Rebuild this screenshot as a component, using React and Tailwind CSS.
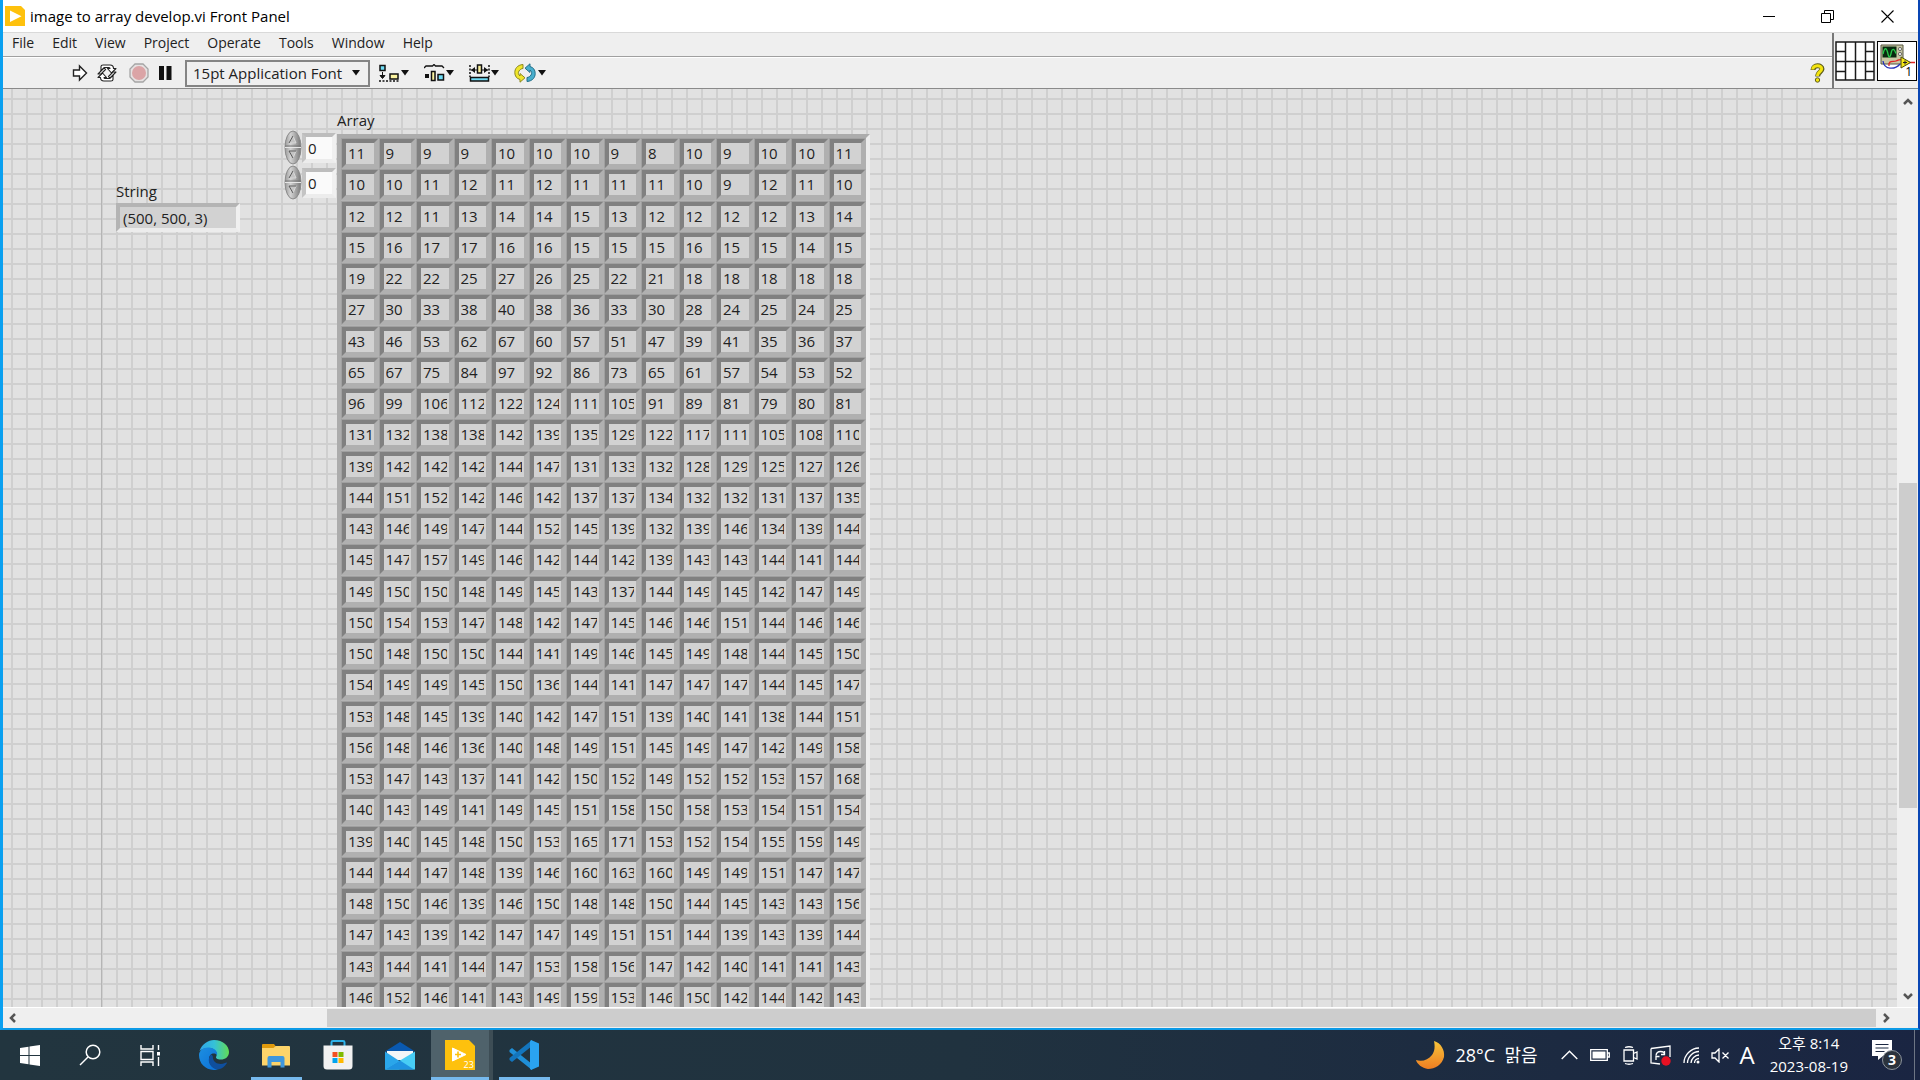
const rows = `11 9 9 9 10 10 10 9 8 10 9 10 10 11
10 10 11 12 11 12 11 11 11 10 9 12 11 10
12 12 11 13 14 14 15 13 12 12 12 12 13 14
15 16 17 17 16 16 15 15 15 16 15 15 14 15
19 22 22 25 27 26 25 22 21 18 18 18 18 18
27 30 33 38 40 38 36 33 30 28 24 25 24 25
43 46 53 62 67 60 57 51 47 39 41 35 36 37
65 67 75 84 97 92 86 73 65 61 57 54 53 52
96 99 106 112 122 124 111 105 91 89 81 79 80 81
131 132 138 138 142 139 135 129 122 117 111 105 108 110
139 142 142 142 144 147 131 133 132 128 129 125 127 126
144 151 152 142 146 142 137 137 134 132 132 131 137 135
143 146 149 147 144 152 145 139 132 139 146 134 139 144
145 147 157 149 146 142 144 142 139 143 143 144 141 144
149 150 150 148 149 145 143 137 144 149 145 142 147 149
150 154 153 147 148 142 147 145 146 146 151 144 146 146
150 148 150 150 144 141 149 146 145 149 148 144 145 150
154 149 149 145 150 136 144 141 147 147 147 144 145 147
153 148 145 139 140 142 147 151 139 140 141 138 144 151
156 148 146 136 140 148 149 151 145 149 147 142 149 158
153 147 143 137 141 142 150 152 149 152 152 153 157 168
140 143 149 141 149 145 151 158 150 158 153 154 151 154
139 140 145 148 150 153 165 171 153 152 154 155 159 149
144 144 147 148 139 146 160 163 160 149 149 151 147 147
148 150 146 139 146 150 148 148 150 144 145 143 143 156
147 143 139 142 147 147 149 151 151 144 139 143 139 144
143 144 141 144 147 153 158 156 147 142 140 141 141 143
146 152 146 141 143 149 159 153 146 150 142 144 142 143`
  .split("\n")
  .map((line) => line.split(" "));

const menus = ["File", "Edit", "View", "Project", "Operate", "Tools", "Window", "Help"];

function Caret() {
  return (
    <svg width="8" height="6" viewBox="0 0 8 6" aria-hidden="true">
      <path d="M0 0h8L4 5.500z" fill="#111" />
    </svg>
  );
}

function TitleBar() {
  return (
    <header className="flex h-8 shrink-0 items-center bg-white pl-[2px]">
      <svg width="20" height="20" viewBox="0 0 20 20" aria-hidden="true">
        <path d="M0 0h16l4 4v16H0z" fill="#fec10d" />
        <path d="M5 4.500v11.500l11.500-5.700z" fill="#fff" />
      </svg>
      <h1 className="ml-[5px] text-[15px] text-black">image to array develop.vi Front Panel</h1>
      <div className="ml-auto flex">
        <button aria-label="Minimize" className="flex h-8 w-[58px] items-center justify-center">
          <svg width="13" height="13" viewBox="0 0 13 13"><path d="M0 6.500h12" stroke="#000" /></svg>
        </button>
        <button aria-label="Restore" className="flex h-8 w-[58px] items-center justify-center">
          <svg width="13" height="13" viewBox="0 0 13 13" fill="none" stroke="#000">
            <path d="M.5 3.500h9v9h-9zM3.500 3.500v-3h9v9h-3" />
          </svg>
        </button>
        <button aria-label="Close" className="flex h-8 w-[62px] items-center justify-center">
          <svg width="13" height="13" viewBox="0 0 13 13"><path d="M.5.5l12 12M12.500.5l-12 12" stroke="#000" strokeWidth="1.100" /></svg>
        </button>
      </div>
    </header>
  );
}

function ToolBar() {
  return (
    <div className="flex h-[31px] items-center border-t border-white pl-[69px]">
      <button aria-label="Run">
        <svg width="16" height="18" viewBox="0 0 16 18"><path d="M1.500 6h6V2l7 7-7 7v-4h-6z" fill="#fff" stroke="#222" strokeWidth="1.400" /></svg>
      </button>
      <button aria-label="Run Continuously" className="ml-[9px]">
        <svg width="20" height="18" viewBox="0 0 20 18" fill="#fff" stroke="#222" strokeWidth="1.100" strokeLinejoin="round">
          <path d="M4 7V2.500Q4 1 6 1h7q3.500 0 3.500 3.500H19L14.500 9 10.500 4.500H13Q13 3.500 12 3.500H7.500z" />
          <path d="M16 11v4.500q0 1.500-2 1.500H7q-3.500 0-3.500-3.500H1L5.500 9l4 4.500H7q0 1 1 1h4.500z" />
          <path d="M1 10l6-6 1.500 1.500L4 10zM19 8l-6 6-1.500-1.500L16 8z" />
        </svg>
      </button>
      <button aria-label="Abort Execution" className="ml-3">
        <svg width="20" height="20" viewBox="0 0 20 20">
          <path d="M6 1h8l5 5v8l-5 5H6l-5-5V6z" fill="#e6e2e2" stroke="#a5a5a5" strokeWidth="1.300" />
          <circle cx="10" cy="10" r="7" fill="#dba4a6" />
        </svg>
      </button>
      <button aria-label="Pause" className="ml-[10px]">
        <svg width="13" height="14" viewBox="0 0 13 14"><path d="M0 0h5v14H0zM7.500 0h5v14h-5z" fill="#111" /></svg>
      </button>
      <button className="ml-[13px] flex h-[27px] w-[185px] items-center justify-between border-2 border-[#848484] bg-[#efefef] pr-2 pl-[6px] text-[15px] text-[#222]">
        15pt Application Font
        <Caret />
      </button>
      <button aria-label="Align Objects" className="ml-[9px] flex items-center gap-[1px]">
        <svg width="21" height="18" viewBox="0 0 21 18">
          <path d="M1 1.500h5v5H1z" fill="#6fdcf5" stroke="#111" strokeWidth="1.500" />
          <path d="M3.500 8v5M1 11.500h5l-2.500 3z" fill="#111" stroke="#111" />
          <path d="M0 17h20" stroke="#111" strokeWidth="1.500" strokeDasharray="2 1.500" />
          <path d="M11 10h8v5h-8z" fill="#fbf3a0" stroke="#111" strokeWidth="1.500" />
        </svg>
        <Caret />
      </button>
      <button aria-label="Distribute Objects" className="ml-[15px] flex items-center gap-[1px]">
        <svg width="21" height="18" viewBox="0 0 21 18">
          <path d="M0 4l2-2h6.500L10 .5 11.500 2H18l2 2" fill="none" stroke="#111" strokeWidth="1.300" />
          <path d="M1 10h4v4H1z" fill="#111" />
          <path d="M7.500 7.500h3.500v9H7.500z" fill="#fbf3a0" stroke="#111" strokeWidth="1.500" />
          <path d="M14 10.500h5.500v5.500H14z" fill="#6fdcf5" stroke="#111" strokeWidth="1.500" />
        </svg>
        <Caret />
      </button>
      <button aria-label="Resize Objects" className="ml-[15px] flex items-center gap-[1px]">
        <svg width="21" height="18" viewBox="0 0 21 18">
          <path d="M1 1v12M20 1v12" stroke="#111" strokeWidth="1.500" strokeDasharray="2 1.500" />
          <path d="M2 6h6M13 6h6" stroke="#111" />
          <path d="M2 6l4-3v6zM19 6l-4-3v6z" fill="#111" />
          <path d="M8.500 1h4v8h-4z" fill="#fbf3a0" stroke="#111" strokeWidth="1.500" />
          <path d="M1.500 13.500h18v3.500h-18z" fill="#6fdcf5" stroke="#111" strokeWidth="1.500" />
        </svg>
        <Caret />
      </button>
      <button aria-label="Reorder" className="ml-[15px] flex items-center gap-[2px]">
        <svg width="22" height="20" viewBox="0 0 22 20" strokeWidth="1" strokeLinejoin="round">
          <path d="M9 1.500C3 2 .800 6 .800 9.500.8 13 2.500 15.500 6 16.500v2.700l5-4.400-5-4.300v2.500C4 11.500 4 9.500 5 8s2.500-2.500 4-2.500z" fill="#f0e62c" stroke="#8b8720" />
          <path d="M13 18.500c6-.5 8.200-4.500 8.200-8 0-3.500-1.700-6-5.200-7V.8l-5 4.400 5 4.300V7c2 1.500 2 3.500 1 5s-2.500 2.500-4 2.500z" fill="#48aecd" stroke="#23708a" />
        </svg>
        <Caret />
      </button>
      <button aria-label="Show Context Help" className="mr-[7px] ml-auto">
        <svg width="15" height="20" viewBox="0 0 15 20">
          <path d="M3 7C3 1.500 12 1.500 12 6c0 3-4.300 3-4.300 7.500" fill="none" stroke="#5f5e1c" strokeWidth="5" />
          <path d="M2.700 6.500C3 1.500 11.700 1.500 11.700 5.800c0 3-4.300 3-4.300 7.200" fill="none" stroke="#f3e40f" strokeWidth="3" />
          <circle cx="7.500" cy="17" r="2.200" fill="#f3e40f" stroke="#5f5e1c" />
        </svg>
      </button>
    </div>
  );
}

function ConnectorPane() {
  return (
    <svg width="40" height="40" viewBox="0 0 40 40" role="img" aria-label="Connector pane" fill="#fff" stroke="#1a1a1a" strokeWidth="1.500">
      <path d="M1 1h38v38H1z" />
      <path d="M10.500 1v38M20.500 1v38M30.500 1v38M1 20.500h38M1 10.500h9.500M1 30.500h9.500M30.500 10.500H39M30.500 30.500H39" />
    </svg>
  );
}

function ViIcon() {
  return (
    <div className="relative size-10 border border-black bg-white">
      <svg width="38" height="38" viewBox="0 0 38 38" aria-hidden="true">
        <path d="M3 3h22v19H3z" fill="#c9c7a4" stroke="#55543f" />
        <path d="M4.500 4.500h14v11h-14z" fill="#082a10" />
        <path d="M5 12c1.500-7 3.500-7 5 0s3 0 3.500-2.500 2.500-4 4.500 2" fill="none" stroke="#29c94a" strokeWidth="1.300" />
        <circle cx="22" cy="7" r="1.600" fill="#eee" stroke="#444" strokeWidth=".7" />
        <circle cx="22" cy="12" r="1.600" fill="#eee" stroke="#444" strokeWidth=".7" />
        <path d="M5 19c1 9 12 9 17 3" fill="none" stroke="#2432b8" strokeWidth="1.300" />
        <path d="M11 24c-1-6 4-4 7-5s3-2 6-1M31 20.500h6" fill="none" stroke="#e02525" strokeWidth="1.300" />
        <path d="M23 15v11l9.500-5.500z" fill="#f7ea15" stroke="#4d4a09" />
        <path d="M25 20.500h4M27 18.500v4" stroke="#222" />
      </svg>
      <span className="absolute right-1 bottom-0 text-xs text-black">1</span>
    </div>
  );
}

function Bars() {
  return (
    <div className="flex shrink-0 border-t border-b border-t-[#d9d9d9] border-b-[#8a8a8a] bg-[#efefef]">
      <div className="min-w-0 flex-1">
        <nav className="flex h-6 items-start gap-[18px] border-b border-[#a0a0a0] pl-[9px] text-sm text-[#222]">
          {menus.map((m) => (
            <button key={m}>{m}</button>
          ))}
        </nav>
        <ToolBar />
      </div>
      <div className="flex items-center gap-[2px] border-l-2 border-[#777] px-[1px]">
        <ConnectorPane />
        <ViIcon />
      </div>
    </div>
  );
}

function Spinner() {
  return (
    <svg width="18" height="35" viewBox="0 0 18 35" aria-hidden="true">
      <defs>
        <linearGradient id="knob" x1="0" x2="1">
          <stop offset="0" stopColor="#9a9a9a" />
          <stop offset=".35" stopColor="#d2d2d2" />
          <stop offset="1" stopColor="#777" />
        </linearGradient>
      </defs>
      <ellipse cx="9" cy="17.500" rx="8" ry="16.500" fill="url(#knob)" stroke="#8a8a8a" />
      <path d="M1 16h16" stroke="#777" />
      <path d="M1 17.500h16" stroke="#e6e6e6" />
      <path d="M5 13l4-7 3 7z" fill="#c4c4c4" stroke="#d8d8d8" />
      <path d="M5 13l4-7" stroke="#555" />
      <path d="M5 21h7l-3 7z" fill="#c4c4c4" stroke="#d8d8d8" />
      <path d="M5 21h7M5 21l4 7" stroke="#555" />
    </svg>
  );
}

function IndexControl({ label }) {
  return (
    <div className="flex h-[35px] items-start">
      <Spinner />
      <input
        aria-label={label}
        defaultValue="0"
        className="mt-[3px] h-[30px] w-[34px] border-4 border-t-[#bdbdbd] border-r-[#f0f0f0] border-b-[#ececec] border-l-[#c4c4c4] bg-[#fafafa] pl-[2px] text-[15px] text-[#222]"
      />
    </div>
  );
}

function FrontPanel() {
  return (
    <main className="relative min-w-0 flex-1 overflow-hidden bg-[#e1e1e1] bg-[linear-gradient(to_right,#cfcfcf_2px,transparent_2px),linear-gradient(to_bottom,#cfcfcf_2px,transparent_2px)] bg-[size:15px_15px] bg-[position:8px_9px] text-[15px] text-[#222]">
      <div className="absolute inset-y-0 left-[98px] w-px bg-[#b5b5b5]" />
      <div className="absolute top-[90px] left-[113px] w-[124px]">
        <label htmlFor="string" className="block leading-6">String</label>
        <input
          id="string"
          readOnly
          value="(500, 500, 3)"
          className="block h-[29px] w-full border-4 border-t-[#b4b4b4] border-r-[#f0f0f0] border-b-[#ececec] border-l-[#b4b4b4] bg-[#d2d2d2] pl-[3px]"
        />
      </div>
      <div className="absolute top-[41px] left-[281px]">
        <IndexControl label="Row index" />
        <IndexControl label="Column index" />
      </div>
      <div className="absolute top-[19px] left-[334px]">
        <h2 className="leading-6">Array</h2>
        <div className="mt-[2px] border-4 border-t-[#acacac] border-r-[#ededed] border-b-[#ededed] border-l-[#acacac] bg-[#b4b4b4]">
          <table aria-label="Array" className="h-[875px] w-[525px] table-fixed border-collapse">
            <tbody>
              {rows.map((row, r) => (
                <tr key={r}>
                  {row.map((value, c) => (
                    <td key={c} className="p-0">
                      <div className="border border-[#a0a0a0] border-r-[#b0b0b0] border-b-[#b0b0b0]">
                        <div className="h-[29px] overflow-hidden border-4 border-t-[#808080] border-r-[#b0b0b0] border-b-[#b0b0b0] border-l-[#808080] bg-[#d2d2d2] pr-[2px] pl-[2px] leading-[21px]">
                          <div className="overflow-hidden">{value}</div>
                        </div>
                      </div>
                    </td>
                  ))}
                </tr>
              ))}
            </tbody>
          </table>
        </div>
      </div>
    </main>
  );
}

function Chevron({ className }) {
  return (
    <svg width="10" height="10" viewBox="0 0 10 10" className={className} aria-hidden="true">
      <path d="M1 7l4-4 4 4" fill="none" stroke="#555" strokeWidth="2.500" />
    </svg>
  );
}

function TaskButton({ label, children, className = "w-[62px]" }) {
  return (
    <button aria-label={label} className={`flex h-full items-center justify-center ${className}`}>
      {children}
    </button>
  );
}

function TaskBar() {
  return (
    <footer className="flex h-[50px] shrink-0 items-center bg-linear-to-r from-[#22353f] via-[#20323f] to-[#1a2542] text-white">
      <TaskButton label="Start" className="w-[60px]">
        <svg width="20" height="21" viewBox="0 0 20 21" fill="#fff"><path d="M0 3l8.500-1.200V10H0zM9.500 1.600L20 0v10H9.500zM0 11h8.500v8.200L0 18zM9.500 11H20v10L9.500 19.400z" /></svg>
      </TaskButton>
      <TaskButton label="Search" className="w-[60px]">
        <svg width="22" height="22" viewBox="0 0 22 22" fill="none" stroke="#fff" strokeWidth="1.500"><circle cx="14" cy="8" r="6.800" /><path d="M9 13l-8 8" /></svg>
      </TaskButton>
      <TaskButton label="Task View" className="mr-[3px] w-[60px]">
        <svg width="21" height="21" viewBox="0 0 21 21" fill="none" stroke="#fff" strokeWidth="1.400"><path d="M1 0v4h12V0M1 21v-4h12v4M1 6.500h12v8H1zM18.500 0v5M18.500 12v9" /><path d="M17 7h3v3.500h-3z" fill="#fff" stroke="none" /></svg>
      </TaskButton>
      <TaskButton label="Microsoft Edge">
        <svg width="30" height="30" viewBox="0 0 30 30">
          <defs>
            <linearGradient id="edgeTop" x1="0" x2="1"><stop offset="0" stopColor="#2fa5e8" /><stop offset=".5" stopColor="#35c1d8" /><stop offset="1" stopColor="#62dc54" /></linearGradient>
            <linearGradient id="edgeLeft" x1="0" y1="0" x2="1" y2="1"><stop offset="0" stopColor="#1d8fe0" /><stop offset="1" stopColor="#0b6fd8" /></linearGradient>
          </defs>
          <path d="M.5 11C3 4 9 0 15 0c9 0 15 6 15 12 0 5-4 7.500-8 7.500-4 0-6-1.500-4.500-3.500C19 11 14 8 10 8 6 8 3 9 .5 11z" fill="url(#edgeTop)" />
          <path d="M0 15C0 10 5 7 10 7.500c5 .5 9 3.500 8 7.500-3-3-8-1-8 4 0 6 5 10 9.500 10.500C9 32 0 25 0 15z" fill="url(#edgeLeft)" />
          <path d="M12 14.500C7 20 11 29.500 20 29.300c3-.5 6-3 8-6.300-.5-.8-1-.5-2 0-5 2.200-11 .5-12-4.500-.2-1.500.2-3-2-4z" fill="#0f4f9e" />
        </svg>
      </TaskButton>
      <TaskButton label="File Explorer" className="w-[62px] bg-[linear-gradient(#76b9ed,#76b9ed)] bg-[size:51px_3px] bg-bottom bg-no-repeat">
        <svg width="28" height="25" viewBox="0 0 28 25">
          <path d="M0 2Q0 1 1 1h11l1.500 2-1.500 3H0z" fill="#e09a0c" />
          <path d="M0 5h11.500l2-2H27q1 0 1 1v18.500H0z" fill="#fdd46a" />
          <path d="M5.500 24.500V15q0-2 2-2h13q2 0 2 2v9.500h-4V19h-9v5.500z" fill="#3f97dd" />
        </svg>
      </TaskButton>
      <TaskButton label="Microsoft Store">
        <svg width="30" height="30" viewBox="0 0 30 30">
          <path d="M8.500 7V2.200Q8.500 1 10 1h10q1.500 0 1.500 1.200V7" fill="none" stroke="#2fb3ea" strokeWidth="2" />
          <path d="M.5 5.500h29V26q0 3.500-3.500 3.500H4Q.5 29.500.5 26z" fill="#f1f1f1" />
          <path d="M9.500 12h5v5h-5z" fill="#f25022" /><path d="M15.500 12h5v5h-5z" fill="#7fba00" />
          <path d="M9.500 18h5v5h-5z" fill="#00a4ef" /><path d="M15.500 18h5v5h-5z" fill="#ffb900" />
        </svg>
      </TaskButton>
      <TaskButton label="Mail">
        <svg width="30" height="29" viewBox="0 0 30 29">
          <path d="M0 10.500L15 1l15 9.500z" fill="#0a59b0" />
          <path d="M2 10h26v9H2z" fill="#f4f6f8" />
          <path d="M0 10.500L19 23l-5 5.500H0z" fill="#2aa6ea" />
          <path d="M0 28.500L30 10.500v18z" fill="#48cdf5" />
          <path d="M15 19.500L29 28.500H0z" fill="#1f93e0" />
        </svg>
      </TaskButton>
      <TaskButton label="LabVIEW" className="w-[62px] border-r-4 border-[#3d4d55] bg-[linear-gradient(#76b9ed,#76b9ed)] bg-[size:100%_3px] bg-bottom bg-no-repeat bg-[color:#4f626b] bg-origin-border">
        <svg width="30" height="30" viewBox="0 0 30 30">
          <path d="M0 0h24l6 6v24H0z" fill="#fec10d" />
          <path d="M7.500 8v13L21 14.500z" fill="#fff" stroke="#fff" strokeLinejoin="round" />
          <path d="M10 14.500h6M13 11.500v6" stroke="#fec10d" strokeWidth="1.600" />
          <text x="18.500" y="28" fontSize="9" fill="#fff" fontFamily="Open Sans">23</text>
        </svg>
      </TaskButton>
      <TaskButton label="Visual Studio Code" className="w-[62px] bg-[linear-gradient(#76b9ed,#76b9ed)] bg-[size:51px_3px] bg-bottom bg-no-repeat">
        <svg width="30" height="30" viewBox="0 0 30 30">
          <path d="M.5 10L3 8l20 16v6L.5 12z" fill="#1f8fd8" />
          <path d="M.5 20L3 22l20-16V0L.5 18z" fill="#1375bd" />
          <path d="M22 0l8 3.500v23L22 30l-1-1.500V1.500z" fill="#2aa3f0" />
        </svg>
      </TaskButton>

      <div className="ml-auto flex h-full items-center pr-[5px]">
        <svg width="29" height="28" viewBox="0 0 29 28" role="img" aria-label="Clear night">
          <defs><linearGradient id="moon" x1="0" y1="0" x2="0" y2="1"><stop offset="0" stopColor="#f8c53a" /><stop offset="1" stopColor="#ee7d22" /></linearGradient></defs>
          <path d="M18 0c7 2 11 9 10 16-2 8-9 12-16 12-6-1-11-5-12-9 6 2 12 0 16-5 3-4 3-9 2-14z" fill="url(#moon)" />
        </svg>
        <span className="ml-[10px] text-lg whitespace-pre">28°C  맑음</span>
        <button aria-label="Show hidden icons" className="ml-[23px]"><svg width="17" height="10" viewBox="0 0 17 10"><path d="M.7 9l7.800-7.800L16.300 9" fill="none" stroke="#fff" strokeWidth="1.400" /></svg></button>
        <svg className="ml-3" width="20" height="12" viewBox="0 0 20 12" role="img" aria-label="Battery"><path d="M.7.7h16.600v10.600H.7zM17.500 4h1.800v4h-1.800" fill="none" stroke="#fff" strokeWidth="1.300" /><path d="M2.500 2.500h13v7h-13z" fill="#fff" /></svg>
        <svg className="ml-[13px]" width="15" height="19" viewBox="0 0 15 19" role="img" aria-label="Camera" fill="none" stroke="#fff" strokeWidth="1.300"><path d="M1 4h9.500v11H1zM10.500 7.500L14 6v7l-3.500-1.500M2 1.500q4-1.500 8 0M2 17.500q4 1.500 8 0" /></svg>
        <svg className="ml-[12px]" width="21" height="21" viewBox="0 0 21 21" role="img" aria-label="Update" fill="none" stroke="#fff" strokeWidth="1.300"><path d="M1 3.500L20 1v11M1 3.500V18l9 1M6 10.500q.5-4 4.500-4t4 3M14.500 6v3.500H11M6 15v-3.500h3.500" /><circle cx="16" cy="16" r="4.700" fill="#e81123" stroke="none" /></svg>
        <svg className="ml-[12px]" width="17" height="17" viewBox="0 0 17 17" role="img" aria-label="Wi-Fi" fill="none" stroke="#fff" strokeWidth="1.300"><path d="M1 16C1 8 8 1 16 1M4.500 16C4.500 10 10 4.500 16 4.500M8 16c0-4 4-8 8-8M11.500 16c0-2.500 2-4.500 4.500-4.500" /><circle cx="15" cy="15" r="1.500" fill="#fff" stroke="none" /></svg>
        <svg className="ml-[11px]" width="19" height="15" viewBox="0 0 19 15" role="img" aria-label="Muted" fill="none" stroke="#fff" strokeWidth="1.300"><path d="M1 5h3l4-4v13l-4-4H1zM11.500 4.500l6 6M17.500 4.500l-6 6" /></svg>
        <button aria-label="Input language" className="ml-[10px] text-2xl">A</button>
        <time className="ml-[15px] flex flex-col items-center text-[15px] leading-[23px]">
          <span>오후 8:14</span>
          <span>2023-08-19</span>
        </time>
        <button aria-label="Notifications" className="relative ml-6 h-8 w-[30px]">
          <svg width="30" height="32" viewBox="0 0 30 32">
            <path d="M0 1h20v16h-9l-5 4v-4H0z" fill="#fff" />
            <path d="M3.500 5.500h13M3.500 9h13M3.500 12.500h9" stroke="#1b2841" strokeWidth="1.200" />
            <circle cx="20" cy="21" r="9.500" fill="#2b333d" stroke="#8c949c" />
          </svg>
          <span className="absolute top-[12px] left-[16px] text-sm leading-[18px] font-bold">3</span>
        </button>
        <div className="ml-3 h-full w-px bg-[#6d7684]" />
      </div>
    </footer>
  );
}

export default function App() {
  return (
    <div className="flex h-screen flex-col overflow-hidden font-['Open_Sans','Noto_Sans_CJK_KR',sans-serif]">
      <div className="flex min-h-0 flex-1 flex-col border-r-2 border-b-2 border-l-3 border-r-[#0a46b4] border-b-[#0d9ae6] border-l-[#0aa0f0]">
        <TitleBar />
        <Bars />
        <div className="flex min-h-0 flex-1">
          <FrontPanel />
          <div className="flex w-[21px] flex-col items-center bg-[#efefef] pt-2 pb-[6px]">
            <Chevron />
            <div className="flex w-[18px] flex-1 flex-col">
              <div className="flex-[377]" />
              <div className="flex-[326] bg-[#cdcdcd]" />
              <div className="flex-[183]" />
            </div>
            <Chevron className="rotate-180" />
          </div>
        </div>
        <div className="flex h-[21px] shrink-0 items-center border-t border-white bg-[#efefef] pr-[27px] pl-[5px]">
          <Chevron className="-rotate-90" />
          <div className="flex h-[18px] flex-1">
            <div className="flex-[309]" />
            <div className="flex-[1548] bg-[#cdcdcd]" />
            <div className="flex-[5]" />
          </div>
          <Chevron className="rotate-90" />
        </div>
      </div>
      <TaskBar />
    </div>
  );
}
